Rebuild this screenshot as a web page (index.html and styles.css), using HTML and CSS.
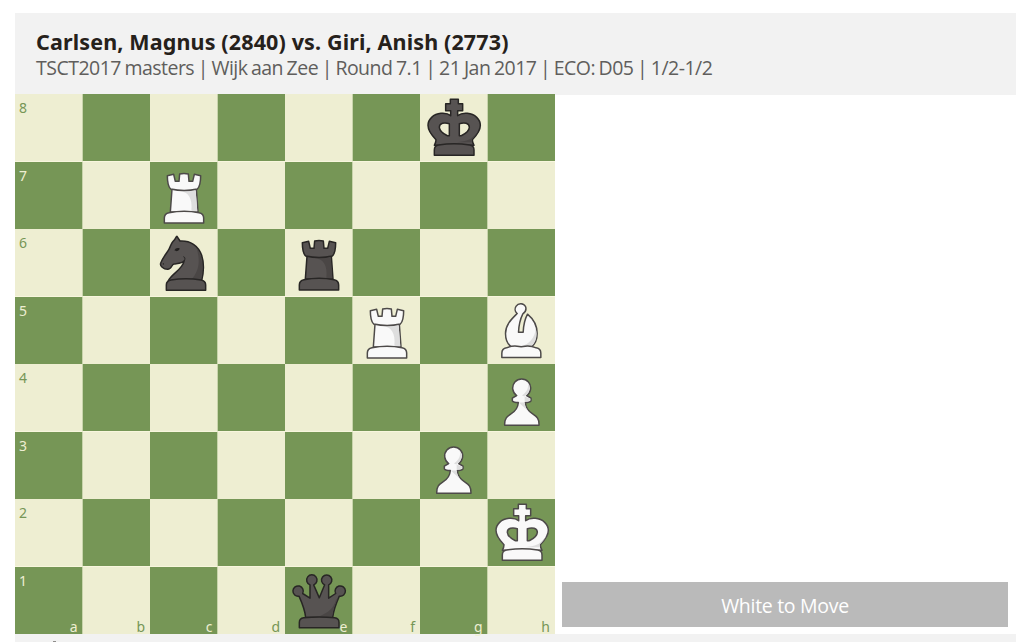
FILE: index.html
```html
<!DOCTYPE html>
<html lang="en">
  <head>
    <meta charset="UTF-8" />
    <meta name="viewport" content="width=device-width, initial-scale=1.0" />
    <title>Carlsen, Magnus vs. Giri, Anish</title>
    <link rel="stylesheet" href="styles.css">
  </head>
  <body>
    <!-- piece shapes, coloured by the .white / .black classes -->
    <svg class="defs" width="0" height="0">
      <symbol id="king" viewBox="15 12 202.5 202.5">
        <path class="body" fill-rule="evenodd" d="M107 77V62H92V41H106V28H130V41H143V62H128V77C136 71 146 69 157 70C180 72 196 88 196 106C196 125 183 138 172 149C172 156 174 160 177 166H58C61 160 63 156 63 149C52 138 39 125 39 106C39 88 55 72 78 70C90 69 100 71 107 77ZM103 101C88 96 73 99 73 112C74 126 87 132 97 137H103ZM133 101C148 96 163 99 163 112C162 126 149 132 139 137H133Z"/>
        <path class="shade" d="M190 92C200 125 178 136 166 147C150 154 140 155 126 157H170V148C185 134 199 118 190 92Z"/>
        <path class="body" d="M58 196V180C58 170 62 166 71 165Q118 157 164 165C173 166 177 170 177 180V196Z"/>
      </symbol>
      <symbol id="queen" viewBox="15 13.5 202.5 202.5">
        <path class="body" d="M77 165C75 143 66 121 57 101A15.500 15.500 0 1 1 68 93L90 107L90 67A15.500 15.500 0 1 1 101 67L118 106L134 67A15.500 15.500 0 1 1 146 67L146 107L167 93A15.500 15.500 0 1 1 178 101C169 121 161 143 158 165Z"/>
        <path class="shade" d="M168 112C162 137 144 151 119 161H156C158 143 165 126 173 108Z"/>
        <path class="body" d="M58 196V180C58 171 62 167 71 166Q118 161 164 166C173 167 177 171 177 180V196Z"/>
      </symbol>
      <symbol id="rook" viewBox="15 10 202.5 202.5">
        <path class="body" d="M81 91L76 160H159L154 91Z"/>
        <path class="shade" d="M104 98C128 99 144 117 139 158H157L152 97Z"/>
        <path class="body" d="M67 51L86 47L91 68H102L104 46Q117 43 130 46L132 68H143L148 47L167 51C167 66 165 83 157 91Q118 100 77 91C69 83 67 66 67 51Z"/>
        <path class="body" d="M58 193V178C58 168 62 164 72 162Q118 153 162 162C172 164 176 168 176 178V193Z"/>
      </symbol>
      <symbol id="bishop" viewBox="11.500 7.500 202.5 202.5">
        <path class="body" d="M82 158C70 149 64 134 64 117C64 91 81 75 99 57C91 51 92 41 96 35C103 24 119 26 124 36C128 47 122 54 116 58C108 74 104 91 103 113H117C118 91 121 76 130 59C147 73 159 93 159 117C159 135 153 149 141 158Z"/>
        <path class="shade" d="M155 103C151 133 135 148 112 156H141C154 145 161 125 155 103Z"/>
        <path class="body" d="M53 189V176C53 166 57 162 67 160Q84 153 99 155L111 157L123 155Q140 153 156 160C166 162 170 166 170 176V189Z"/>
      </symbol>
      <symbol id="knight" viewBox="15 9 202.5 202.5">
        <path class="body" d="M70 164C82 141 111 133 118 104C111 112 100 112 87 114C79 115 81 130 68 130C55 130 44 119 47 112C53 94 66 81 73 68C77 58 80 49 87 43C91 40 93 31 96 31L105 45C136 43 160 59 170 88C178 113 176 140 170 164Z"/>
        <path class="shade" d="M155 67C166 103 163 135 140 160H168C173 136 176 90 155 67Z"/>
        <path class="mark" d="M88 73C91 66 98 64 104 67C103 75 96 78 88 73ZM54 110Q57 112 57 116L53 115Z"/>
        <path class="crease" d="M118 104Q123 94 115 92"/>
        <path class="body" d="M64 193V177C64 168 68 164 78 162Q123 155 168 162C178 164 182 168 182 177V193Z"/>
      </symbol>
      <symbol id="pawn" viewBox="11 5.500 202.5 202.5">
        <path class="body" d="M61 189C60 169 68 163 79 156C94 147 101 136 102 121C94 121 86 119 84 116L84 108L97 100A27 27 0 1 1 127 100L140 108V116C138 119 130 121 123 121C124 136 131 147 146 156C157 163 165 169 164 189Z"/>
        <path class="shade" d="M103 121L141 155C129 146 122 136 121 121Z"/>
        <path class="shade" d="M130 63C135 76 126 91 113 100L138 110V115L121 119V101L126 99C137 90 139 72 130 63Z"/>
      </symbol>
    </svg>

    <div class="header">
      <h1>Carlsen, Magnus (2840) vs. Giri, Anish (2773)</h1>
      <p>TSCT2017 masters | Wijk aan Zee | Round 7.1 | 21 Jan 2017 | ECO: D05 | 1/2-1/2</p>
    </div>
    <div class="game">
      <div class="board" id="board"></div>
      <div class="side">
        <div class="status">White to Move</div>
      </div>
    </div>
    <div class="footer"></div>

    <script>
      const pieces = {
        g8: "black king",
        c7: "white rook",
        c6: "black knight",
        e6: "black rook",
        f5: "white rook",
        h5: "white bishop",
        h4: "white pawn",
        g3: "white pawn",
        h2: "white king",
        e1: "black queen",
      };
      const board = document.getElementById("board");
      let squares = "";
      for (let rank = 8; rank >= 1; rank--) {
        "abcdefgh".split("").forEach((file, i) => {
          const shade = (i + rank) % 2 ? "dark" : "light";
          squares += `<div class="square ${shade}">`;
          if (pieces[file + rank]) {
            const [color, name] = pieces[file + rank].split(" ");
            squares += `<svg class="piece ${color}"><use href="#${name}"/></svg>`;
          }
          if (file === "a") squares += `<span class="rank">${rank}</span>`;
          if (rank === 1) squares += `<span class="file">${file}</span>`;
          squares += `</div>`;
        });
      }
      board.innerHTML = squares;
    </script>
  </body>
</html>
```
FILE: styles.css
```css
* {
  box-sizing: border-box;
}
body {
  margin: 0;
  padding: 13px 0 0 15px;
  height: 642px;
  overflow: hidden;
  background: #fff;
  font-family: "Open Sans", "Noto Sans", sans-serif;
}
.defs {
  position: absolute;
}
.header {
  height: 82px;
  padding: 15px 21px 0;
  background: #f2f2f2;
  white-space: nowrap;
}
.header h1 {
  margin: 0;
  font-family: "Noto Sans", sans-serif;
  font-size: 21.5px;
  line-height: 27px;
  font-weight: 700;
  letter-spacing: 0.14px;
  color: #26211b;
}
.header p {
  margin: 0;
  font-size: 19.5px;
  line-height: 26px;
  letter-spacing: -0.52px;
  word-spacing: -1px;
  color: #605e5c;
}
.game {
  display: flex;
  height: 540px;
  margin-top: -1px;
}
.board {
  display: grid;
  grid-template-columns: repeat(8, 67.5px);
  grid-template-rows: repeat(8, 67.5px);
  width: 540px;
  /* light seams over a 2x2 checker tile */
  background:
    linear-gradient(90deg, transparent 67px, rgba(255, 252, 228, 0.6) 67px 68px, transparent 68px) 0 0 / 135px 135px,
    linear-gradient(transparent 67px, rgba(255, 252, 228, 0.6) 67px 68px, transparent 68px) 0 0 / 135px 135px,
    conic-gradient(#769656 25%, #eeeed2 0 50%, #769656 0 75%, #eeeed2 0) 0 0 / 135px 135px;
}
.square {
  position: relative;
}
.piece {
  display: block;
  width: 67.5px;
  height: 67.5px;
}
.rank,
.file {
  position: absolute;
  font-family: "Noto Sans", sans-serif;
  font-size: 14px;
  line-height: 18px;
}
.rank {
  left: 4px;
  top: 5px;
}
.file {
  right: 5px;
  bottom: -2px;
}
.light {
  color: #769656;
}
.dark {
  color: #eeeed2;
}
/* variables reach the shapes inside <use> */
.white {
  --fill: #f9f9f9;
  --line: #4d4a49;
  --shade: #dedede;
}
.black {
  --fill: #575352;
  --line: #282625;
  --shade: #4a4645;
}
.body {
  fill: var(--fill);
  stroke: var(--line);
  stroke-width: 4.5;
  stroke-linejoin: round;
}
.shade {
  fill: var(--shade);
}
.mark {
  fill: #211f1e;
}
.crease {
  fill: none;
  stroke: var(--line);
  stroke-width: 3;
}
.side {
  flex: 1;
  display: flex;
  flex-direction: column;
  justify-content: flex-end;
  padding: 0 8px 7px 7px;
}
.status {
  height: 45px;
  line-height: 48px;
  background: #bababa;
  color: #fff;
  font-size: 19.5px;
  letter-spacing: -0.3px;
  text-align: center;
}
.footer {
  height: 8px;
  padding: 7px 0 0 38px;
  background: #f2f2f2;
}
.footer::before {
  content: "";
  display: block;
  width: 3px;
  height: 1px;
  background: #8f8d8b;
}
```
